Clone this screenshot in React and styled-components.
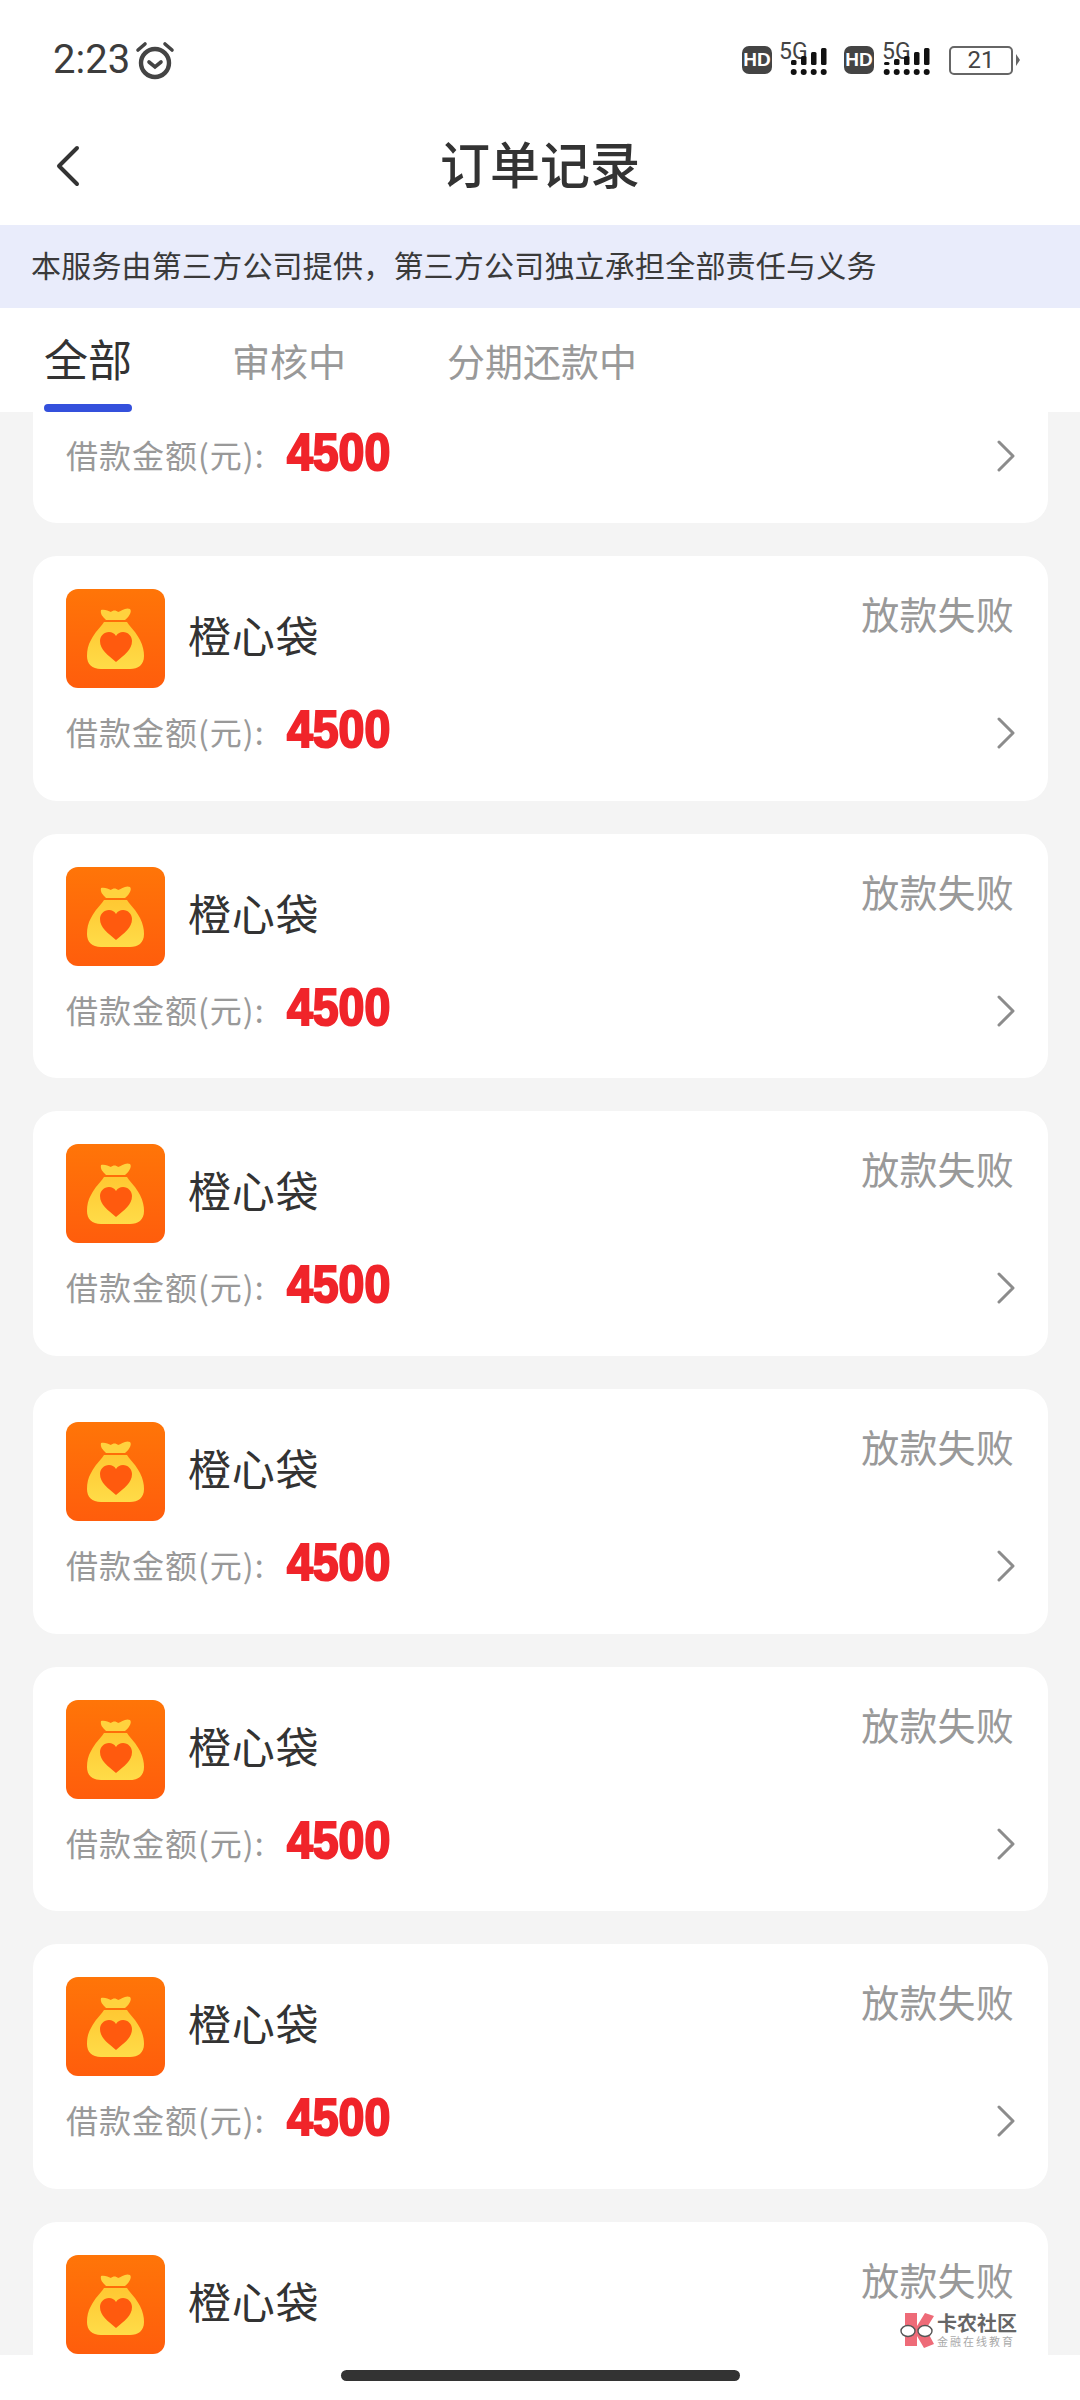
import React from "react";
import styled, { createGlobalStyle } from "styled-components";

const GlobalStyle = createGlobalStyle`
  html, body {
    margin: 0;
    padding: 0;
    background: #fff;
  }
  * {
    box-sizing: border-box;
  }
`;

const CJK = `"Noto Sans CJK SC", "Noto Sans", sans-serif`;

const Page = styled.div`
  width: 1080px;
  height: 2400px;
  display: flex;
  flex-direction: column;
  overflow: hidden;
  position: relative;
  background: #fff;
  font-family: ${CJK};
`;

const StatusBar = styled.div`
  height: 120px;
  flex: none;
  display: flex;
  align-items: center;
  padding: 0 67px 0 53px;
`;

const Clock = styled.span`
  font-family: Roboto, sans-serif;
  font-size: 40px;
  line-height: 1;
  color: #3c3c3c;
  margin-right: 4px;
`;

const StatusRight = styled.div`
  margin-left: auto;
  display: flex;
  align-items: center;
`;

const HdBadge = styled.span`
  width: 30px;
  height: 28px;
  border-radius: 7px;
  background: #444;
  color: #fff;
  font-family: "Liberation Sans", sans-serif;
  font-weight: 700;
  font-size: 19px;
  display: flex;
  align-items: center;
  justify-content: center;
`;

const SignalWrap = styled.div`
  position: relative;
  width: 50px;
  height: 36px;
  margin-left: ${(p) => p.$ml}px;
  margin-right: ${(p) => p.$mr}px;
`;

const NetType = styled.span`
  position: absolute;
  left: 0;
  top: -2px;
  font-family: Roboto, sans-serif;
  font-size: 23px;
  line-height: 1;
  color: #444;
`;

const Battery = styled.div`
  width: 64px;
  height: 29px;
  border: 2px solid #666;
  border-radius: 5px;
  display: flex;
  align-items: center;
  justify-content: center;
  font-family: Roboto, sans-serif;
  font-size: 24px;
  line-height: 1;
  color: #444;
  position: relative;
  &::after {
    content: "";
    position: absolute;
    right: -9px;
    top: 6px;
    border-left: 4px solid #666;
    border-top: 6px solid transparent;
    border-bottom: 6px solid transparent;
  }
`;

const Header = styled.div`
  height: 105px;
  flex: none;
  display: flex;
  align-items: center;
  justify-content: center;
  position: relative;
`;

const BackBtn = styled.div`
  position: absolute;
  left: 54px;
  top: 25px;
  display: flex;
`;

const Title = styled.h1`
  margin: 0 0 22px;
  font-size: 50px;
  line-height: 60px;
  font-weight: 500;
  color: #333;
`;

const Notice = styled.div`
  height: 83px;
  flex: none;
  background: #e9ecfb;
  display: flex;
  align-items: center;
  padding: 0 0 6px 31px;
  font-size: 30px;
  line-height: 36px;
  letter-spacing: 0.2px;
  color: #3a3a3a;
`;

const Tabs = styled.div`
  height: 104px;
  flex: none;
  display: flex;
  align-items: flex-start;
  padding-left: 44px;
`;

const Tab = styled.div`
  position: relative;
  height: 104px;
  margin-right: ${(p) => p.$mr}px;
  padding-top: ${(p) => (p.$active ? 24 : 29)}px;
  font-size: ${(p) => (p.$active ? 44 : 38)}px;
  line-height: ${(p) => (p.$active ? 52 : 46)}px;
  color: ${(p) => (p.$active ? "#333" : "#999")};
  &::after {
    content: "";
    display: ${(p) => (p.$active ? "block" : "none")};
    position: absolute;
    left: 0;
    right: 0;
    bottom: 0;
    height: 8px;
    border-radius: 4px;
    background: #3450dc;
  }
`;

const List = styled.div`
  flex: 1;
  min-height: 0;
  overflow: hidden;
  background: #f4f4f4;
  padding: 0 32px 0 33px;
  display: flex;
  flex-direction: column;
  gap: 33px;
`;

// the list is scrolled: the first card shows only its bottom, the last only its top
const Card = styled.div`
  height: ${(p) => (p.$scrolledOff ? "111px" : "244.67px")};
  flex: none;
  background: #fff;
  border-radius: ${(p) => (p.$scrolledOff ? "0 0 24px 24px" : "24px")};
  padding: ${(p) => (p.$scrolledOff ? "12px" : "33px")} 32px 0 33px;
`;

const CardTop = styled.div`
  display: flex;
  align-items: center;
`;

const AppName = styled.span`
  margin: 0 0 9px 23px;
  font-size: 43px;
  line-height: 52px;
  letter-spacing: 0.7px;
  color: #333;
`;

const CardStatus = styled.span`
  margin-left: auto;
  margin-right: 2px;
  align-self: flex-start;
  font-size: 38px;
  line-height: 48px;
  letter-spacing: 0.2px;
  color: #999;
`;

const AmountRow = styled.div`
  height: 60px;
  margin-top: ${(p) => (p.$flush ? 0 : 13)}px;
  display: flex;
  align-items: center;
`;

const AmountLabel = styled.span`
  font-size: 32px;
  line-height: 40px;
  letter-spacing: 1px;
  color: #999;
`;

const Amount = styled.span`
  display: inline-block;
  margin: 0 0 3px 22px;
  font-family: "Liberation Sans", sans-serif;
  font-weight: 700;
  font-size: 51px;
  line-height: 1;
  color: #f0242a;
  -webkit-text-stroke: 2.2px #f0242a;
  transform: scaleX(0.91);
  transform-origin: left center;
`;

const Chevron = styled.div`
  margin: 4px 0 0 auto;
  display: flex;
`;

const HomeStrip = styled.div`
  height: 45px;
  flex: none;
  background: #fff;
  display: flex;
  justify-content: center;
  padding-top: 15px;
`;

const HomePill = styled.div`
  width: 399px;
  height: 11px;
  border-radius: 6px;
  background: #333;
`;

const Watermark = styled.div`
  position: absolute;
  left: 900px;
  top: 2312px;
  display: flex;
  align-items: center;
  gap: 3px;
`;

const WatermarkText = styled.div`
  display: flex;
  flex-direction: column;
`;

const WatermarkName = styled.span`
  font-size: 20px;
  line-height: 22px;
  font-weight: 700;
  color: #666;
`;

const WatermarkSub = styled.span`
  font-size: 11px;
  line-height: 14px;
  letter-spacing: 2px;
  color: #aaa;
`;

const AlarmIcon = () => (
  <svg width="42" height="42" viewBox="0 0 42 42" fill="none" stroke="#444" strokeLinecap="round">
    <circle cx="21" cy="24" r="14" strokeWidth="4.4" />
    <path d="M15 23l6 5 6-5" strokeWidth="3.6" />
    <path d="M4 11l7-6M38 11l-7-6" strokeWidth="3.6" />
  </svg>
);

const SignalBars = ({ columns }) => (
  <svg width={columns.length * 10} height="30" viewBox={`0 0 ${columns.length * 10} 30`} style={{ position: "absolute", right: 0, bottom: 0 }}>
    {columns.map((h, i) => (
      <g key={i} fill="#111">
        <rect x={i * 10 + 2} y={17 - h} width="5.5" height={h} rx="1.5" />
        <circle cx={i * 10 + 4.7} cy="24" r="3" />
      </g>
    ))}
  </svg>
);

const BagIcon = () => (
  <svg width="99" height="99" viewBox="0 0 99 99" style={{ flex: "none" }}>
    <defs>
      <linearGradient id="bgGrad" x1="0" y1="0" x2="0" y2="1">
        <stop offset="0" stopColor="#ff7508" />
        <stop offset="1" stopColor="#ff5d0c" />
      </linearGradient>
      <linearGradient id="bagGrad" x1="0" y1="0" x2="0" y2="1">
        <stop offset="0" stopColor="#ffc832" />
        <stop offset="1" stopColor="#ffdc48" />
      </linearGradient>
    </defs>
    <rect width="99" height="99" rx="12" fill="url(#bgGrad)" />
    <path d="M35 21c4-1 7 1 10 2 2-2 5-2 7 0 3-1 8-5 12-3 2 2 0 7-5 11H40c-3-3-6-6-5-10z" fill="#ffd23e" />
    <path d="M38 33h23c4 6 9 10 13 18 3 6 4 11 4 16 0 9-6 13-14 13H35c-9 0-14-5-14-13 0-6 1-11 4-16 4-8 9-12 13-18z" fill="url(#bagGrad)" />
    <path d="M50 73C42 66 34 61 34 52c0-5 4-9 9-9 3 0 5 1 7 4 2-3 4-4 7-4 5 0 9 4 9 9 0 9-8 14-16 21z" fill="#ff5a0e" />
  </svg>
);

const WatermarkLogo = () => (
  <svg width="34" height="36" viewBox="0 0 34 36">
    <path d="M5 1h12v13l8-13 9 3-8 13 8 15-10 4-7-12v10H5z" fill="#ee6b78" />
    <ellipse cx="8" cy="19" rx="7" ry="5.5" fill="#fff" stroke="#555" strokeWidth="1.4" />
    <ellipse cx="25" cy="19" rx="7" ry="5.5" fill="#fff" stroke="#555" strokeWidth="1.4" />
  </svg>
);

const tabs = [
  { label: "全部", active: true, mr: 100 },
  { label: "审核中", mr: 101 },
  { label: "分期还款中", mr: 0 },
];

const AmountLine = ({ flush }) => (
  <AmountRow $flush={flush}>
    <AmountLabel>借款金额(元):</AmountLabel>
    <Amount>4500</Amount>
    <Chevron>
      <svg width="20" height="32" viewBox="0 0 20 32" fill="none" stroke="#8c8c8c" strokeWidth="3" strokeLinecap="round" strokeLinejoin="round">
        <path d="M3 2l14 14L3 30" />
      </svg>
    </Chevron>
  </AmountRow>
);

const CardHead = () => (
  <CardTop>
    <BagIcon />
    <AppName>橙心袋</AppName>
    <CardStatus>放款失败</CardStatus>
  </CardTop>
);

const FULL_CARDS = 6;

const App = () => {
  const orders = Array.from({ length: FULL_CARDS }, (_, i) => i);

  return (
    <Page>
      <GlobalStyle />
      <StatusBar>
        <Clock>2:23</Clock>
        <AlarmIcon />
        <StatusRight>
          <HdBadge>HD</HdBadge>
          <SignalWrap $ml={7} $mr={15}>
            <NetType>5G</NetType>
            <SignalBars columns={[5, 9, 13, 17]} />
          </SignalWrap>
          <HdBadge>HD</HdBadge>
          <SignalWrap $ml={8} $mr={17}>
            <NetType>5G</NetType>
            <SignalBars columns={[3, 6, 9, 13, 17]} />
          </SignalWrap>
          <Battery>21</Battery>
        </StatusRight>
      </StatusBar>

      <Header>
        <BackBtn>
          <svg width="28" height="42" viewBox="0 0 28 42" fill="none" stroke="#333" strokeWidth="4" strokeLinecap="round" strokeLinejoin="round">
            <path d="M23 3L5 21l18 18" />
          </svg>
        </BackBtn>
        <Title>订单记录</Title>
      </Header>

      <Notice>本服务由第三方公司提供，第三方公司独立承担全部责任与义务</Notice>

      <Tabs>
        {tabs.map((tab) => (
          <Tab key={tab.label} $active={tab.active} $mr={tab.mr}>
            {tab.label}
          </Tab>
        ))}
      </Tabs>

      <List>
        <Card $scrolledOff>
          <AmountLine flush />
        </Card>
        {orders.map((id) => (
          <Card key={id}>
            <CardHead />
            <AmountLine />
          </Card>
        ))}
        <Card>
          <CardHead />
        </Card>
      </List>

      <HomeStrip>
        <HomePill />
      </HomeStrip>

      <Watermark>
        <WatermarkLogo />
        <WatermarkText>
          <WatermarkName>卡农社区</WatermarkName>
          <WatermarkSub>金融在线教育</WatermarkSub>
        </WatermarkText>
      </Watermark>
    </Page>
  );
};

export default App;
